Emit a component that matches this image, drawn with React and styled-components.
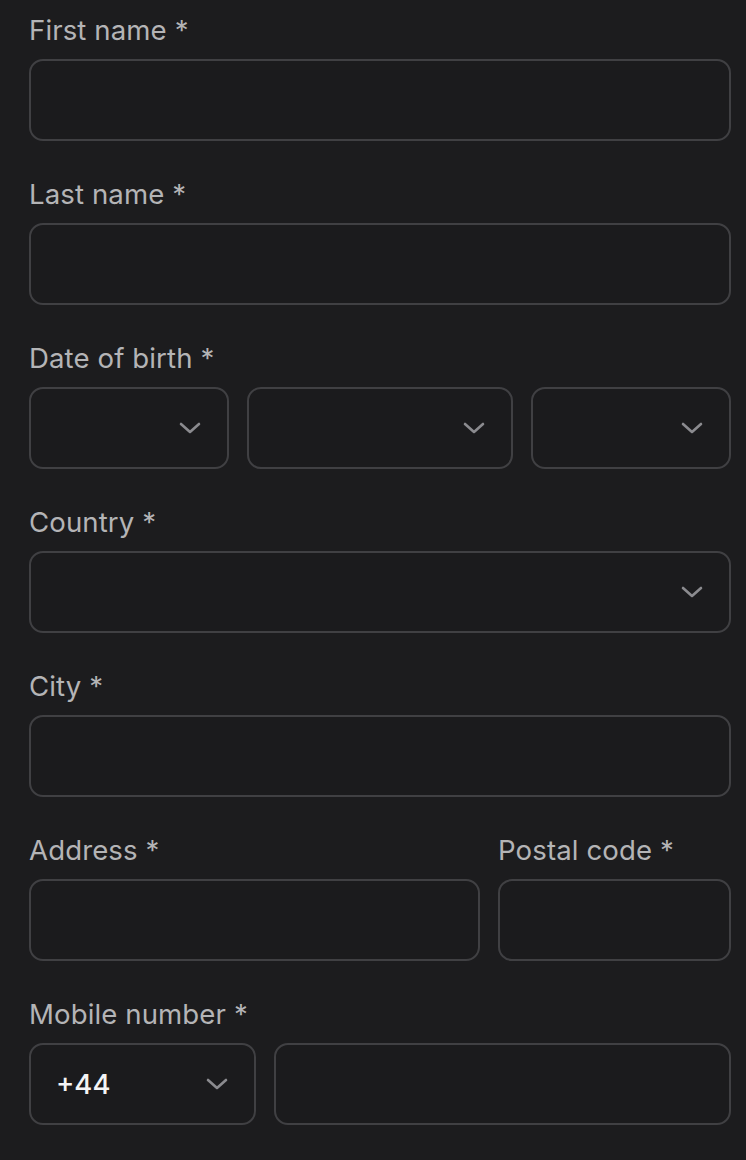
import React from 'react';
import styled, { createGlobalStyle } from 'styled-components';

const GlobalStyle = createGlobalStyle`
  html, body {
    margin: 0;
    padding: 0;
    background: #1c1c1e;
  }
  body {
    font-family: Inter, "Liberation Sans", sans-serif;
    -webkit-font-smoothing: antialiased;
  }
`;

const Form = styled.form`
  display: flex;
  flex-direction: column;
  gap: 37px;
  padding: 14px 15px 0 29px;
  width: 746px;
  box-sizing: border-box;
  min-height: 1160px;
`;

const Field = styled.div`
  display: flex;
  flex-direction: column;
  gap: 12px;
  min-width: 0;
`;

const Label = styled.label`
  font-size: 27.6px;
  line-height: 33px;
  color: #b4b4b6;
  font-weight: 400;
  letter-spacing: 0.1px;
`;

const Row = styled.div`
  display: grid;
  grid-template-columns: ${p => p.$cols};
  gap: 18px;
`;

const Box = styled.div`
  position: relative;
  height: 82px;
  box-sizing: border-box;
  border: 2px solid #404043;
  border-radius: 14px;
  background: #1b1b1d;
  display: flex;
  align-items: center;
  padding: 0 25px;
`;

const Value = styled.span`
  font-size: 27.5px;
  font-weight: 500;
  color: #f4f4f5;
`;

const Chevron = styled.svg`
  position: absolute;
  right: 26px;
  top: 50%;
  margin-top: -6px;
`;

const Arrow = () => (
  <Chevron width="22" height="12" viewBox="0 0 22 12" fill="none">
    <path d="M2 2l9 8 9-8" stroke="#8b8b8f" strokeWidth="2.6" strokeLinecap="round" strokeLinejoin="round" />
  </Chevron>
);

const Select = ({ children }) => (
  <Box>
    {children}
    <Arrow />
  </Box>
);

export default function App() {
  return (
    <>
      <GlobalStyle />
      <Form>
        <Field>
          <Label>First name *</Label>
          <Box />
        </Field>
        <Field>
          <Label>Last name *</Label>
          <Box />
        </Field>
        <Field>
          <Label>Date of birth *</Label>
          <Row $cols="3fr 4fr 3fr">
            <Select />
            <Select />
            <Select />
          </Row>
        </Field>
        <Field>
          <Label>Country *</Label>
          <Select />
        </Field>
        <Field>
          <Label>City *</Label>
          <Box />
        </Field>
        <Row $cols="1fr 233px">
          <Field>
            <Label>Address *</Label>
            <Box />
          </Field>
          <Field>
            <Label>Postal code *</Label>
            <Box />
          </Field>
        </Row>
        <Field>
          <Label>Mobile number *</Label>
          <Row $cols="227px 1fr">
            <Select>
              <Value>+44</Value>
            </Select>
            <Box />
          </Row>
        </Field>
      </Form>
    </>
  );
}
